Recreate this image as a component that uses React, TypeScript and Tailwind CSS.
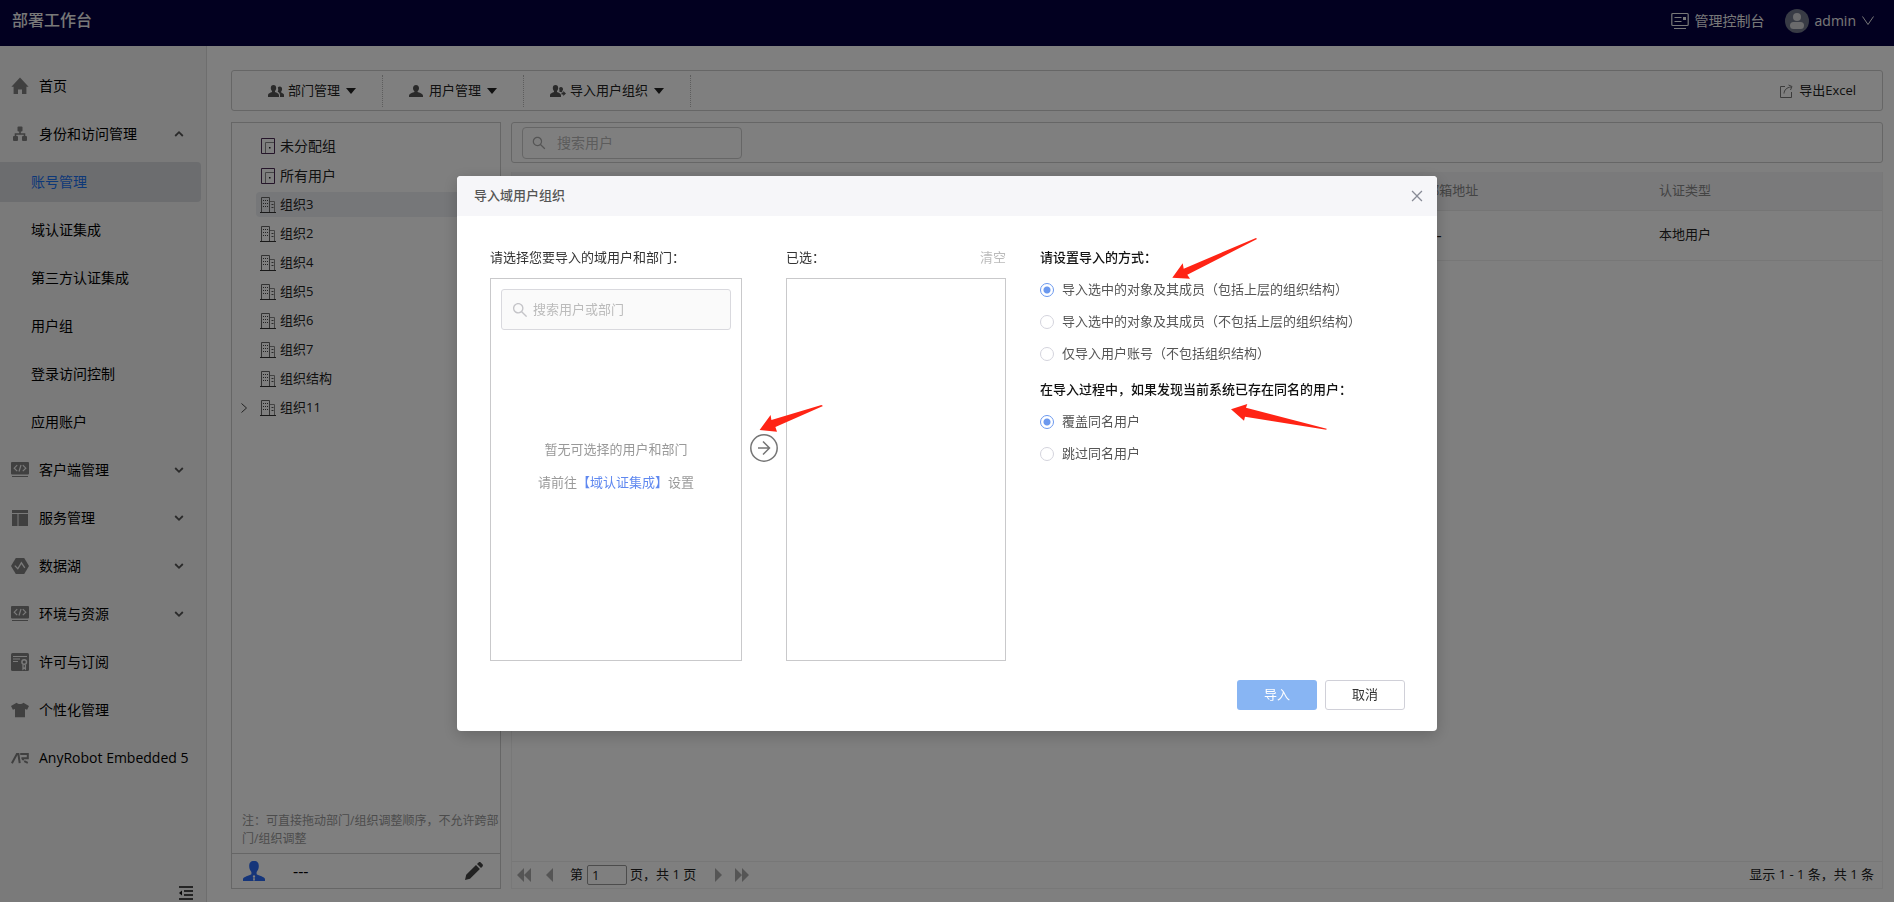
import { useState } from 'react';
import type { ReactNode } from 'react';
import { AiOutlineClose, AiOutlineSearch } from 'react-icons/ai';

/* ---------- icons ---------- */

const HomeIcon = () => (
  <svg viewBox="0 0 18 18" className="size-[18px]" fill="currentColor">
    <path d="M9 .5 17.600 9.800h-2.200V17h-4.400v-4.600H7V17H2.600V9.800H.4z" />
  </svg>
);

const OrgIcon = () => (
  <svg viewBox="0 0 18 18" className="size-[18px]" fill="currentColor">
    <rect x="6.500" y="1.500" width="5" height="5" rx="1" />
    <rect x="2" y="11" width="5" height="5" rx="1" />
    <rect x="11" y="11" width="5" height="5" rx="1" />
    <path d="M4.500 11.800V9h9v2.800M9 6v3" fill="none" stroke="currentColor" strokeWidth="1.600" />
  </svg>
);

const CodeIcon = () => (
  <svg viewBox="0 0 18 18" className="size-[18px]">
    <rect x="0" y="1" width="18" height="12.500" rx="1" fill="currentColor" />
    <path
      d="M6.200 4.200 3.200 7.200l3 3M11.800 4.200l3 3-3 3M10 4 8 10.500"
      fill="none"
      stroke="#f4f4f4"
      strokeWidth="1.200"
    />
    <path d="M1 15.500h16" stroke="currentColor" />
  </svg>
);

const LayoutIcon = () => (
  <svg viewBox="0 0 18 18" className="size-[18px]" fill="currentColor">
    <path d="M1 1h16v3H1zM1 5h5.500v12H1zM7.500 5H17v12H7.500z" />
  </svg>
);

const LakeIcon = () => (
  <svg viewBox="0 0 18 18" className="size-[18px]">
    <path d="M4.800 1h8.400L18 9l-4.800 8H4.800L0 9z" fill="currentColor" />
    <path d="m3.800 8.600 3 3.200 3.600-6 3.400 5" fill="none" stroke="#f4f4f4" strokeWidth="1.300" />
  </svg>
);

const LicenseIcon = () => (
  <svg viewBox="0 0 18 18" className="size-[18px]">
    <rect width="18" height="18" rx="1.500" fill="currentColor" />
    <g fill="none" stroke="#f4f4f4">
      <path d="M2 3.500h14M2 6h7M2 8.500h5" />
      <circle cx="13.200" cy="9" r="2.300" strokeWidth="1.500" />
      <path d="M12 11.400V16l1.200-1 1.200 1v-4.600" strokeWidth="1.300" />
    </g>
  </svg>
);

const ShirtIcon = () => (
  <svg viewBox="0 0 18 18" className="size-[18px]" fill="currentColor">
    <path d="M5.600 1.800c1.400 1.600 5.400 1.600 6.800 0L18 5l-1.900 3.800-2.100-.9v8.400H4V7.900l-2.100.9L0 5z" />
  </svg>
);

const RobotIcon = () => (
  <svg viewBox="0 0 18 18" className="size-[18px]" fill="none" stroke="currentColor" strokeWidth="2">
    <path d="M.9 14.200 5.900 5h1.500l1.300 9.200" />
    <path d="M9.200 5h7.600v4.200h-6.400M12.400 9.200l-.6 2M13.200 12.200l3.600 1.600" />
  </svg>
);

const Chevron = ({ open }: { open?: boolean }) => (
  <svg viewBox="0 0 10 10" className="size-[10px] text-[#555]" fill="none" stroke="currentColor" strokeWidth="1.800">
    <path d={open ? 'M1.200 7 5 3.200 8.800 7' : 'M1.200 3 5 6.800 8.800 3'} />
  </svg>
);

const CollapseIcon = () => (
  <svg viewBox="0 0 16 14" className="h-[14px] w-4" fill="none" stroke="#111" strokeWidth="1.300">
    <path d="M1 1h14M6 5h9M6 9h9M1 13h14" />
    <path d="M4 4.500v5L1 7z" fill="#111" stroke="none" />
  </svg>
);

const DoorIcon = () => (
  <svg viewBox="0 0 16 16" className="size-4" fill="none">
    <path d="M1.500 15.500V.5h13v15z" stroke="#4b2a55" />
    <path d="M5.500 15V4.500H14" stroke="#888" />
    <path d="M9 9h1.500v1.500H9z" fill="#222" />
  </svg>
);

const BuildingIcon = () => (
  <svg viewBox="0 0 16 16" className="size-4" fill="none">
    <path d="M1.500 15V.5h8V15" stroke="#666" />
    <path d="M10 4.500h4.500V15" stroke="#888" />
    <path d="M0 15.500h16" stroke="#333" />
    <path d="M3 3.500h5M3 6.500h5M3 9.500h5" stroke="#444" strokeDasharray="1 1" />
    <path d="M11.500 7.500h2M11.500 10.500h2" stroke="#555" />
  </svg>
);

const PEOPLE_BODY = 'M5.500 0C7.300 0 8.200 1.300 8.200 3c0 1.400-.6 2.400-1.200 3v1.100c1.400.7 4 1.300 4 3.400V12H0v-1.500c0-2.100 2.600-2.700 4-3.400V6C3.400 5.400 2.800 4.400 2.800 3 2.800 1.300 3.700 0 5.500 0z';

const PeopleIcon = () => (
  <svg viewBox="0 0 16 12" className="h-3 w-4" fill="#555">
    <path d={PEOPLE_BODY} />
    <path d="M11.800 1.500c1.500 0 2.300 1 2.300 2.500 0 1-.4 1.900-.9 2.400v1c1 .5 2.800 1 2.800 2.600v2h-4v-2c0-1.700-1-2.700-2.300-3.300.6-.9.7-2.800.1-4.300.4-.6 1.100-.9 2-.9z" />
  </svg>
);

const PersonIcon = () => (
  <svg viewBox="0 0 16 12" className="h-3 w-4" fill="#555">
    <path d="M7 0c2 0 3 1.400 3 3.200 0 1.300-.7 2.400-1.400 3v.8C10 7.800 14 8.200 14 10.800V12H0v-1.200C0 8.200 4 7.800 5.400 7v-.8C4.700 5.600 4 4.500 4 3.200 4 1.400 5 0 7 0z" />
  </svg>
);

const ImportPeopleIcon = () => (
  <svg viewBox="0 0 16 12" className="h-3 w-4" fill="#555">
    <path d={PEOPLE_BODY} />
    <path d="M11 2c1.400 0 2 1 2 2.200L12 7H9.500l-.3-4c.3-.6 1-1 1.800-1z" />
    <path d="M11.500 7.500h1.800V6L16 8.500 13.300 11V9.500h-1.800z" />
  </svg>
);

const Caret = () => (
  <svg viewBox="0 0 10 6" className="h-[6px] w-[10px]" fill="#222">
    <path d="M0 0h10L5 6z" />
  </svg>
);

const ExportIcon = () => (
  <svg viewBox="0 0 14 14" className="size-[14px]" fill="none" stroke="#777">
    <path d="M6 2.500H1.500v11h11V8M5 9.500c.3-3.500 2.500-6 7-6.500M9.500 1l3.500 1.500-1.500 3.500" />
  </svg>
);

const ConsoleIcon = () => (
  <svg viewBox="0 0 18 18" className="size-[18px]" fill="none" stroke="currentColor">
    <rect x=".8" y="1.500" width="16.400" height="12" rx="1" strokeWidth="1.200" />
    <path d="M3.500 5.500h7M3.500 9.500h7M3 16.500h12" />
    <path d="M12 5h3v3h-3z" fill="currentColor" stroke="none" />
  </svg>
);

const AvatarIcon = () => (
  <svg viewBox="0 0 24 24" className="size-6">
    <circle cx="12" cy="12" r="12" fill="#71778b" />
    <circle cx="12" cy="8" r="4" fill="#d5d5d8" />
    <rect x="5" y="13" width="14" height="7" rx="3.500" fill="#d5d5d8" />
  </svg>
);

const BlueUserIcon = () => (
  <svg viewBox="0 0 22 20" className="h-5 w-[22px]" fill="#2a6af5">
    <path d="M11 0c3.600 0 4.800 2 4.800 5 0 2.800-1 4.600-2.200 6v2.200c2 1.600 8.400 2.300 8.400 5V20H0v-1.800c0-2.700 6.400-3.400 8.400-5V11C7.200 9.600 6.200 7.800 6.200 5c0-3 1.200-5 4.800-5z" />
    <path d="m11 14 1.300 1.300-.8 1.200.5 3h-2l.5-3-.8-1.200z" fill="#fff" />
  </svg>
);

const PencilIcon = () => (
  <svg viewBox="0 0 18 18" className="size-[18px]" fill="#444">
    <path d="M0 18 1.200 12.800 11 3l3.900 3.900L5 16.700zM12 2l1.600-1.500c.6-.6 1.500-.6 2.100 0l1.800 1.800c.6.6.6 1.500 0 2.100L16 6z" />
  </svg>
);

const PageArrow = ({ double, flip }: { double?: boolean; flip?: boolean }) => (
  <svg
    viewBox={double ? '0 0 14 14' : '0 0 9 14'}
    className={`${double ? 'w-[14px]' : 'w-[9px]'} h-[14px] ${flip ? 'rotate-180' : ''}`}
    fill="#aaa"
  >
    <path d={double ? 'M7 0v14L0 7zM14 0v14L7 7z' : 'M8 0v14L1 7z'} />
  </svg>
);

const CircleArrow = () => (
  <svg viewBox="0 0 28 28" className="size-7" fill="none" stroke="#757575" strokeWidth="1.500">
    <circle cx="14" cy="14" r="13.200" />
    <path d="M8 14h11M13 7.500l6.500 6.500-6.500 6.500" />
  </svg>
);

/* ---------- data ---------- */

interface MenuItem {
  label: string;
  icon?: ReactNode;
  state?: 'open' | 'closed';
}

const MENU: MenuItem[] = [
  { label: '首页', icon: <HomeIcon /> },
  { label: '身份和访问管理', icon: <OrgIcon />, state: 'open' },
  { label: '账号管理' },
  { label: '域认证集成' },
  { label: '第三方认证集成' },
  { label: '用户组' },
  { label: '登录访问控制' },
  { label: '应用账户' },
  { label: '客户端管理', icon: <CodeIcon />, state: 'closed' },
  { label: '服务管理', icon: <LayoutIcon />, state: 'closed' },
  { label: '数据湖', icon: <LakeIcon />, state: 'closed' },
  { label: '环境与资源', icon: <CodeIcon />, state: 'closed' },
  { label: '许可与订阅', icon: <LicenseIcon /> },
  { label: '个性化管理', icon: <ShirtIcon /> },
  { label: 'AnyRobot Embedded 5', icon: <RobotIcon /> },
];

const ORGS = ['组织3', '组织2', '组织4', '组织5', '组织6', '组织7', '组织结构', '组织11'];

const IMPORT_MODES = [
  '导入选中的对象及其成员（包括上层的组织结构）',
  '导入选中的对象及其成员（不包括上层的组织结构）',
  '仅导入用户账号（不包括组织结构）',
];

const CONFLICT_MODES = ['覆盖同名用户', '跳过同名用户'];

/* ---------- page parts ---------- */

function Header() {
  return (
    <header className="flex h-[46px] shrink-0 items-center justify-between bg-[#040040] pr-5 pl-3 text-[#f0f0f0]">
      <h1 className="pb-[6px] text-base font-medium">部署工作台</h1>
      <div className="flex items-center pb-1 text-sm">
        <button className="flex items-center gap-[6px]">
          <ConsoleIcon />
          管理控制台
        </button>
        <button className="ml-5 flex items-center">
          <AvatarIcon />
          <span className="ml-[6px]">admin</span>
          <svg viewBox="0 0 12 10" className="ml-[6px] h-[10px] w-3" fill="none" stroke="currentColor">
            <path d="m.5.5 5.500 8 5.500-8" />
          </svg>
        </button>
      </div>
    </header>
  );
}

function Sidebar() {
  return (
    <aside className="flex w-[207px] shrink-0 flex-col border-r border-[#dcdcdc] bg-[#f4f4f4]">
      <nav className="flex flex-col gap-2 pt-5 pr-[5px] text-sm">
        {MENU.map((item) => (
          <a
            key={item.label}
            href="#"
            className={`flex h-10 items-center rounded-r-sm pr-[17px] ${item.icon ? 'pl-[11px]' : 'pl-[31px]'} ${
              item.label === '账号管理' ? 'bg-[#d8dade] text-[#1870f0]' : 'text-black'
            }`}
          >
            {item.icon && <span className="mr-[10px] text-[#808080]">{item.icon}</span>}
            <span className="flex-1 whitespace-nowrap">{item.label}</span>
            {item.state && <Chevron open={item.state === 'open'} />}
          </a>
        ))}
      </nav>
      <button aria-label="收起" className="mt-auto mr-3 mb-[2px] self-end">
        <CollapseIcon />
      </button>
    </aside>
  );
}

function ToolbarButton({ icon, label, className }: { icon: ReactNode; label: string; className: string }) {
  return (
    <button className={`flex h-8 items-center border-r border-dotted border-[#bbb] pr-[26px] ${className}`}>
      {icon}
      <span className="mr-[6px] ml-1">{label}</span>
      <Caret />
    </button>
  );
}

function Toolbar() {
  return (
    <div className="flex h-[41px] shrink-0 items-center rounded-[3px] border border-[#ccc] text-[13px] text-[#222]">
      <ToolbarButton icon={<PeopleIcon />} label="部门管理" className="pl-9" />
      <ToolbarButton icon={<PersonIcon />} label="用户管理" className="pl-[26px]" />
      <ToolbarButton icon={<ImportPeopleIcon />} label="导入用户组织" className="pl-[26px]" />
      <button className="mr-[26px] ml-auto flex items-center gap-[6px]">
        <ExportIcon />
        导出Excel
      </button>
    </div>
  );
}

function OrgTree() {
  return (
    <div className="flex w-[270px] shrink-0 flex-col">
      <div className="flex flex-1 flex-col border border-b-0 border-[#ccc] pt-2 text-[#222]">
        <ul className="text-sm">
          {['未分配组', '所有用户'].map((name) => (
            <li key={name} className="flex h-[30px] items-center gap-1 pl-7">
              <DoorIcon />
              {name}
            </li>
          ))}
        </ul>
        <ul className="flex flex-col gap-1 pt-px text-[13px]">
          {ORGS.map((name, i) => (
            <li key={name} className="flex h-[25px] items-center">
              <span className="flex w-6 justify-center">
                {name === '组织11' && (
                  <svg viewBox="0 0 6 10" className="h-[10px] w-[6px]" fill="none" stroke="#444">
                    <path d="m.5.5 5 4.500-5 4.500" />
                  </svg>
                )}
              </span>
              <span
                className={`flex h-full flex-1 items-center gap-1 rounded-l-sm pl-1 ${i === 0 ? 'bg-[#eceef2]' : ''}`}
              >
                <BuildingIcon />
                {name}
              </span>
            </li>
          ))}
        </ul>
        <p className="mt-auto pb-[5px] pl-[10px] text-xs leading-[18px] text-[#999]">
          注：可直接拖动部门/组织调整顺序，不允许跨部门/组织调整
        </p>
      </div>
      <div className="flex h-9 items-center border border-[#ccc] pr-[17px] pl-[11px] text-base">
        <BlueUserIcon />
        <span className="ml-7">---</span>
        <button aria-label="编辑" className="ml-auto">
          <PencilIcon />
        </button>
      </div>
    </div>
  );
}

function UserTable() {
  return (
    <section className="flex min-w-0 flex-1 flex-col text-[13px]">
      <div className="flex h-[41px] shrink-0 items-center rounded-[3px] border border-[#ccc] pl-[10px]">
        <label className="flex h-8 w-[220px] items-center rounded border border-[#ccc] pl-2">
          <AiOutlineSearch className="size-4 text-[#aaa]" />
          <input
            aria-label="搜索用户"
            placeholder="搜索用户"
            className="ml-[10px] w-40 bg-transparent text-sm outline-none placeholder:text-[#b8b8b8]"
          />
        </label>
      </div>
      <div className="mt-[9px] flex flex-1 flex-col border border-t-0 border-[#f0f0f0]">
        <table className="w-full table-fixed text-left">
          <thead className="h-[38px] bg-[#f4f4f7] text-[#888]">
            <tr className="border-b border-[#eaeaea]">
              <th />
              <th className="w-[17%] pl-[10px] font-normal">邮箱地址</th>
              <th className="w-[17%] pl-[10px] font-normal">认证类型</th>
            </tr>
          </thead>
          <tbody>
            <tr className="h-[50px] border-b border-[#eee] text-[#222]">
              <td />
              <td className="pl-[10px] text-base">---</td>
              <td className="pl-[10px]">本地用户</td>
            </tr>
          </tbody>
        </table>
        <footer className="mt-auto flex h-[27px] items-center border-t border-[#eee] pr-2 pl-[5px] text-[#222]">
          <button aria-label="首页"><PageArrow double /></button>
          <button aria-label="上一页" className="ml-[14px]"><PageArrow /></button>
          <label className="ml-4 flex items-center gap-1">
            第
            <input aria-label="页码" defaultValue="1" className="h-5 w-10 rounded-xs border border-[#999] px-1" />
          </label>
          <span className="ml-[3px]">页，共 1 页</span>
          <button aria-label="下一页" className="ml-[18px]"><PageArrow flip /></button>
          <button aria-label="末页" className="ml-3"><PageArrow double flip /></button>
          <span className="ml-auto">显示 1 - 1 条，共 1 条</span>
        </footer>
      </div>
    </section>
  );
}

/* ---------- dialog ---------- */

interface RadioListProps {
  name: string;
  options: string[];
  value: number;
  onChange: (v: number) => void;
}

function RadioList({ name, options, value, onChange }: RadioListProps) {
  return (
    <div>
      {options.map((text, i) => (
        <label key={text} className="flex h-8 items-center gap-2 text-[#555]">
          <input
            type="radio"
            name={name}
            checked={value === i}
            onChange={() => onChange(i)}
            className="size-[14px] appearance-none rounded-full border border-[#d3d3dc] checked:border-[#6b98ee] checked:bg-[radial-gradient(circle,#6b98ee_3px,transparent_4px)]"
          />
          {text}
        </label>
      ))}
    </div>
  );
}

// Red pointers at the arrow button and the two option groups
function Pointers() {
  return (
    <svg className="pointer-events-none absolute top-0 left-0 h-full w-full" fill="#ff2415">
      <path d="m302.600 254 11-15 .8 5 50-15 1.600 1-47.600 21 1.600 4.700z" />
      <path d="m715.300 101.700 10.400-14.400 1 5.400L799 62l1 1-69.700 35.700 2.700 4z" />
      <path d="m774 233.300 16.300-5.300-1.300 3.700 80.700 21-.4 1L788 240.700l-1 4z" />
    </svg>
  );
}

function ImportDialog() {
  const [mode, setMode] = useState(0);
  const [conflict, setConflict] = useState(0);

  return (
    <div className="fixed inset-0 flex items-start justify-center bg-black/50 pt-44">
      <div
        role="dialog"
        aria-label="导入域用户组织"
        className="relative w-[980px] overflow-hidden rounded bg-white text-[13px] text-[#333] shadow-[0_4px_16px_rgba(0,0,0,0.2)]"
      >
        <div className="flex h-10 items-center justify-between bg-[#f6f6f9] pr-3 pl-[17px]">
          <h2 className="font-medium text-[#555]">导入域用户组织</h2>
          <button aria-label="关闭">
            <AiOutlineClose className="size-4 text-[#888b96]" />
          </button>
        </div>

        <div className="flex px-[33px] pt-[31px]">
          <div className="w-[252px]">
            <p className="mb-[11px] leading-5">请选择您要导入的域用户和部门：</p>
            <div className="h-[383px] border border-[#c9c9cb] p-[10px]">
              <label className="flex h-[41px] items-center rounded-[3px] border border-[#d9d9de] bg-[#fafafa] pl-[9px]">
                <AiOutlineSearch className="size-[18px] text-[#c4c4c8]" />
                <input
                  aria-label="搜索用户或部门"
                  placeholder="搜索用户或部门"
                  className="ml-1 w-40 bg-transparent outline-none placeholder:text-[#bbb]"
                />
              </label>
              <p className="mt-[103px] text-center leading-[33px] text-[#999]">
                暂无可选择的用户和部门
                <br />
                请前往
                <a href="#" className="text-[#5f88f0]">【域认证集成】</a>
                设置
              </p>
            </div>
          </div>

          <button aria-label="添加" className="mx-2 mb-3 self-center">
            <CircleArrow />
          </button>

          <div className="w-[220px]">
            <div className="mb-[11px] flex justify-between leading-5">
              <span>已选：</span>
              <button className="text-[#bbb]">清空</button>
            </div>
            <div className="h-[383px] border border-[#c9c9cb]" />
          </div>

          <div className="ml-[34px] flex-1">
            <h3 className="mb-[7px] leading-5 font-medium text-[#111]">请设置导入的方式：</h3>
            <RadioList name="mode" options={IMPORT_MODES} value={mode} onChange={setMode} />
            <h3 className="mt-[9px] mb-[7px] leading-5 font-medium text-[#111]">
              在导入过程中，如果发现当前系统已存在同名的用户：
            </h3>
            <RadioList name="conflict" options={CONFLICT_MODES} value={conflict} onChange={setConflict} />
          </div>
        </div>

        <div className="flex justify-end gap-2 px-8 pt-[19px] pb-[21px]">
          <button className="h-[30px] w-20 rounded-[3px] bg-[#88b5f3] text-white">导入</button>
          <button className="h-[30px] w-20 rounded-[3px] border border-[#d0d0d8] bg-white">取消</button>
        </div>

        <Pointers />
      </div>
    </div>
  );
}

export default function App() {
  return (
    <div className="flex h-screen flex-col overflow-hidden bg-white font-['Open_Sans','Noto_Sans_CJK_SC',sans-serif]">
      <Header />
      <div className="flex min-h-0 flex-1">
        <Sidebar />
        <main className="flex min-w-0 flex-1 flex-col gap-[11px] pt-6 pr-[11px] pb-[13px] pl-6">
          <Toolbar />
          <div className="flex min-h-0 flex-1 gap-[10px]">
            <OrgTree />
            <UserTable />
          </div>
        </main>
      </div>
      <ImportDialog />
    </div>
  );
}
